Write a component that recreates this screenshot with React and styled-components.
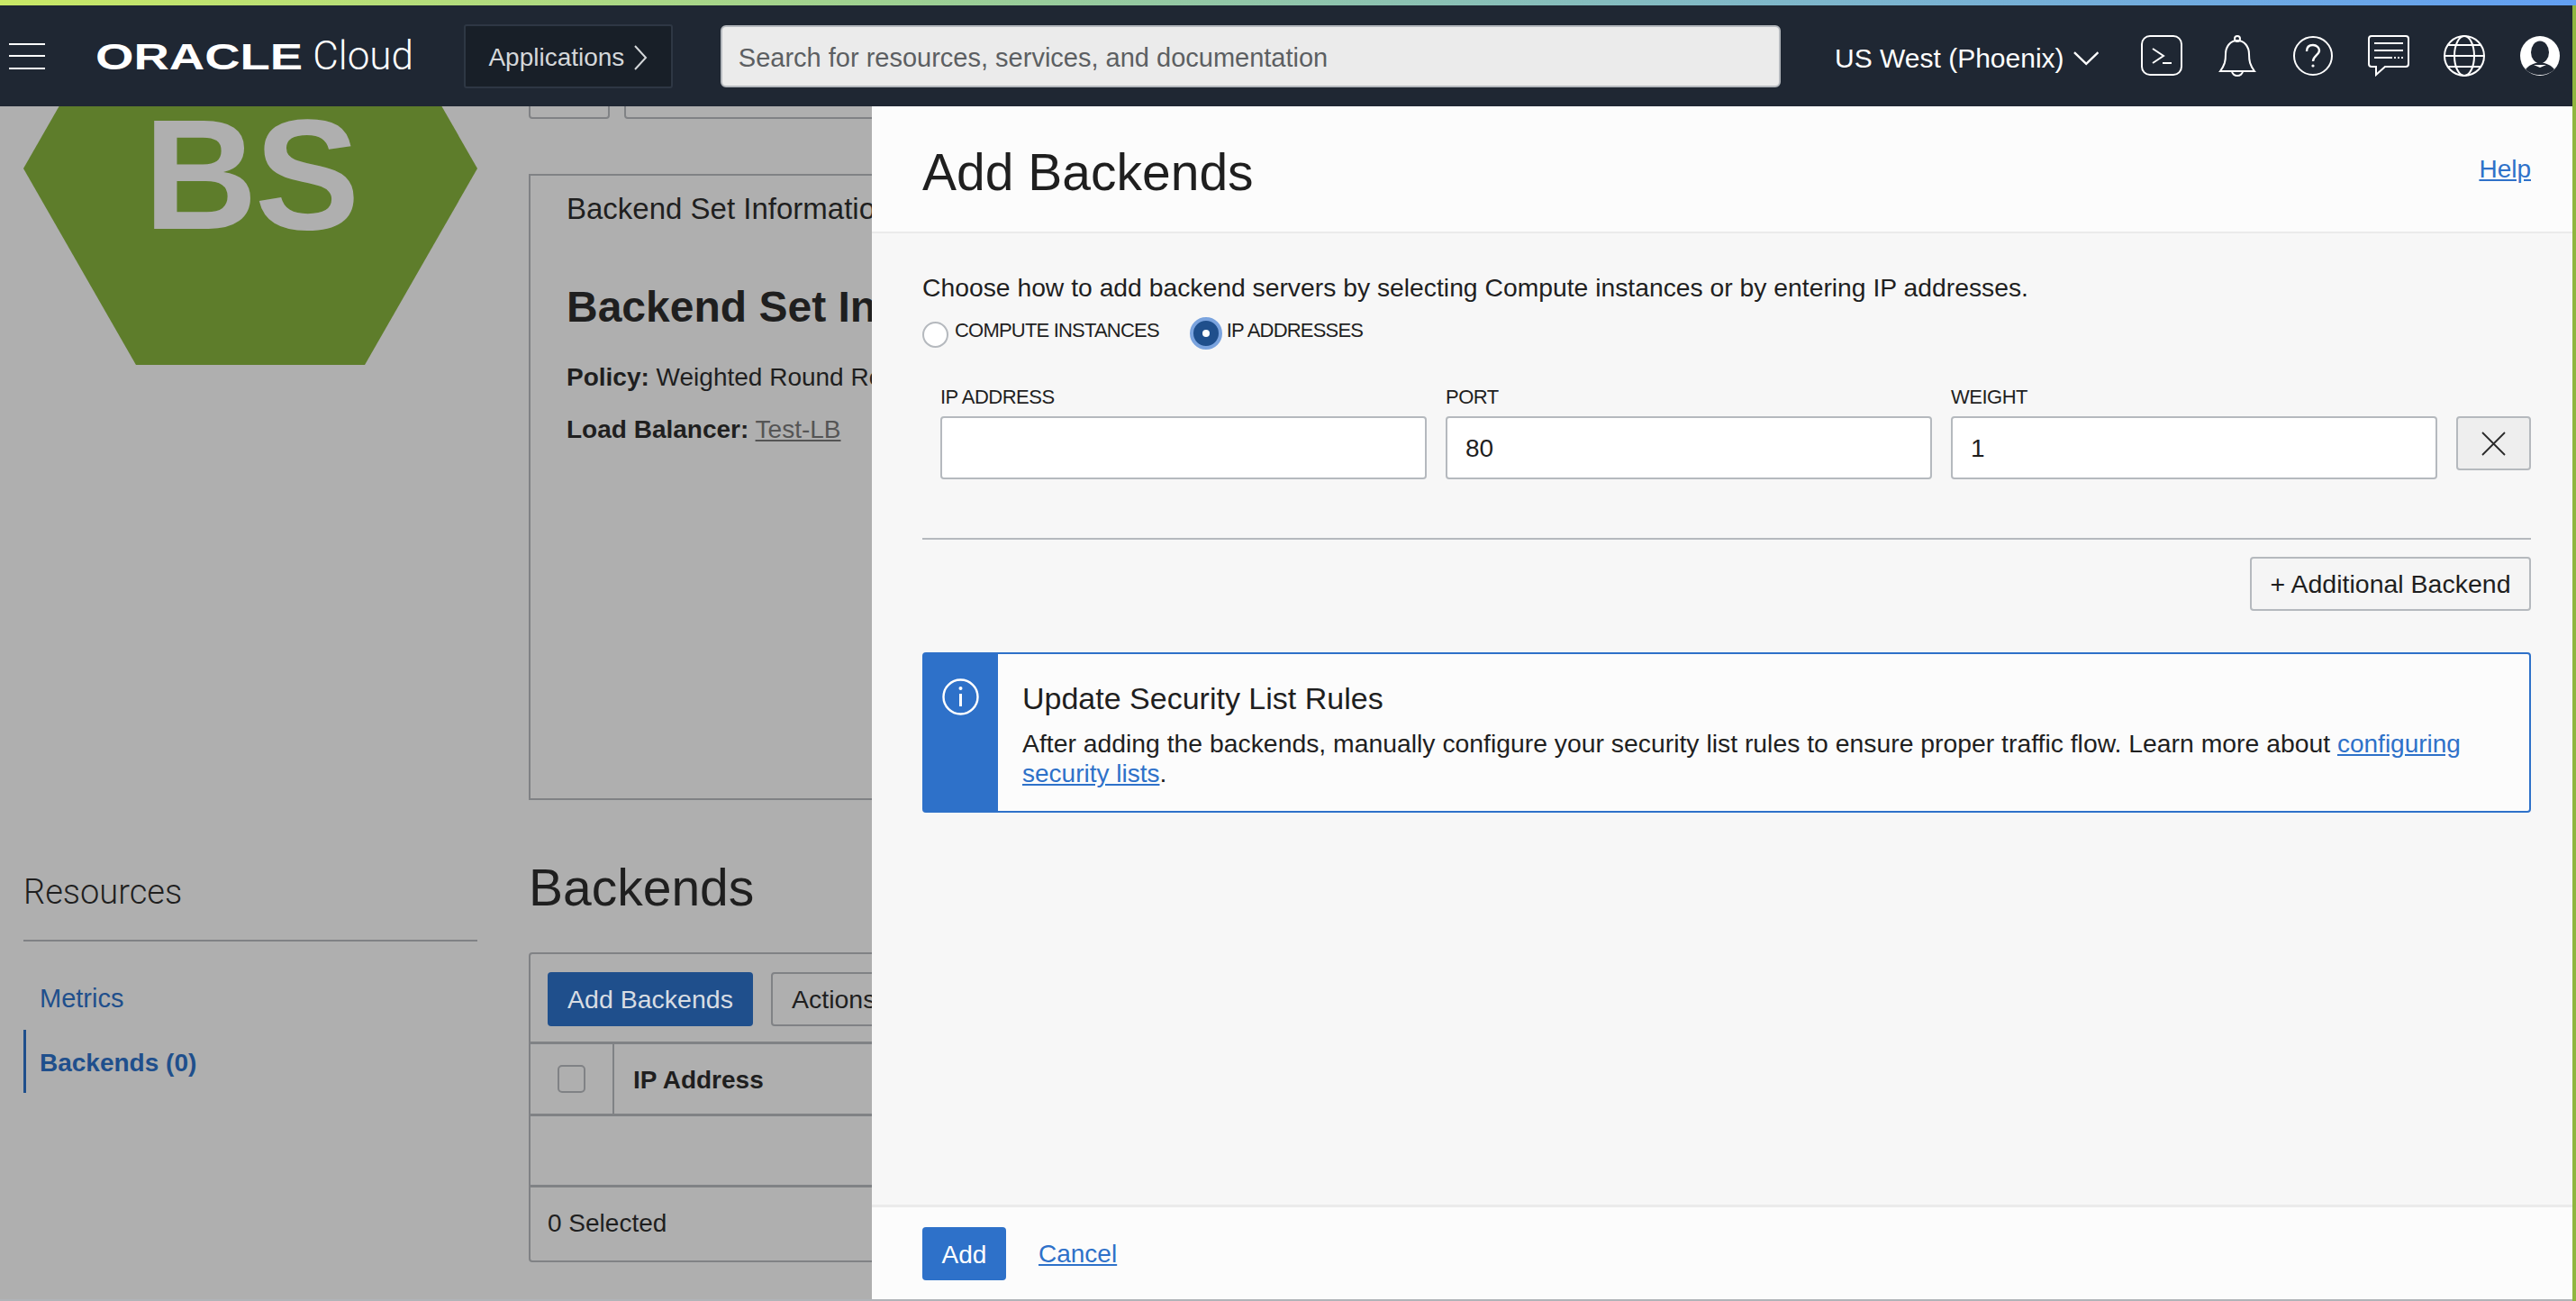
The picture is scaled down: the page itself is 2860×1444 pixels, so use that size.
import React from "react";
import styled, { createGlobalStyle } from "styled-components";

const Global = createGlobalStyle`
  html, body { margin: 0; padding: 0; }
  body { font-family: "Liberation Sans", Arial, sans-serif; color: #1f1f1f; }
  * { box-sizing: border-box; }
`;

const Frame = styled.div`
  width: 2860px;
  height: 1444px;
  overflow: hidden;
  display: grid;
  grid-template-columns: 2856px 4px;
  grid-template-rows: 6px 1436px 2px;
  background: #fff;
`;
const GradientBar = styled.div`
  grid-column: 1 / 3;
  background: linear-gradient(90deg, #c9e866 0%, #9ccf94 36%, #80b8c8 68%, #629ff2 100%);
`;
const Screen = styled.div`
  display: flex;
  flex-direction: column;
  min-height: 0;
`;
const RightEdge = styled.div`
  grid-row: 2 / 4;
  grid-column: 2;
  background: #8fb63f;
`;
const BottomEdge = styled.div`
  background: #b0b4b8;
`;

/* header */
const Header = styled.header`
  height: 112px;
  flex: none;
  display: flex;
  align-items: center;
  background: #1f2733;
  padding: 0 13px 0 10px;
  color: #fff;
  position: relative;
  z-index: 2;
`;
const Burger = styled.div`
  width: 40px;
  height: 29px;
  display: flex;
  flex-direction: column;
  justify-content: space-between;
  margin-right: 56px;
  span { display: block; height: 2px; background: #fff; }
`;
const Logo = styled.div`
  width: 353px;
  display: flex;
  align-items: baseline;
  margin-right: 56px;
  height: 44px;
`;
const LogoWord = styled.span`
  display: inline-block;
  width: 243px;
  font-size: 41px;
  line-height: 44px;
  font-weight: 700;
  transform: scaleX(1.33);
  transform-origin: left center;
`;
const LogoCloud = styled.span`
  font-family: Roboto, "Liberation Sans", sans-serif;
  font-weight: 300;
  font-size: 44px;
  line-height: 44px;
`;
const AppsButton = styled.button`
  width: 232px;
  height: 71px;
  margin-right: 53px;
  background: #181f28;
  border: 2px solid #2e3744;
  border-radius: 3px;
  color: #d4d7da;
  font: 28px "Liberation Sans", sans-serif;
  display: flex;
  align-items: center;
  justify-content: center;
  gap: 10px;
  padding: 4px 0 0;
`;
const SearchBox = styled.input`
  width: 1178px;
  height: 69px;
  background: #ebebeb;
  border: 2px solid #b5b9be;
  border-radius: 6px;
  padding: 4px 18px 0;
  font: 29px "Liberation Sans", sans-serif;
  margin-right: 60px;
  &::placeholder { color: #5c5f62; opacity: 1; }
`;
const Region = styled.div`
  display: flex;
  align-items: center;
  gap: 10px;
  font-size: 30px;
  width: 293px;
  margin-right: 47px;
  padding-top: 6px;
  white-space: nowrap;
`;
const IconRow = styled.div`
  display: flex;
  gap: 38px;
`;
const IconSlot = styled.div`
  width: 46px;
  height: 46px;
  svg { display: block; }
`;

/* page behind the panel */
const Viewport = styled.div`
  flex: 1;
  min-height: 0;
  position: relative;
  overflow: hidden;
  background: #afafaf;
`;
const BackPage = styled.div`
  display: flex;
  margin-top: -149px;
  padding-left: 26px;
`;
const Sidebar = styled.aside`
  width: 504px;
  flex: none;
  margin-right: 57px;
`;
const Hexagon = styled.div`
  width: 504px;
  height: 436px;
  padding-top: 12px;
  background: #5e7d2b;
  clip-path: polygon(24.8% 0, 75.2% 0, 100% 50%, 75.2% 100%, 24.8% 100%, 0 50%);
  display: flex;
  align-items: center;
  justify-content: center;
  color: #afafaf;
  font-size: 175px;
  letter-spacing: -3px;
  font-weight: 700;
`;
const SideTitle = styled.h3`
  margin: 564px 0 0;
  height: 76px;
  border-bottom: 2px solid #808285;
  font-family: Roboto, "Liberation Sans", sans-serif;
  font-weight: 300;
  font-size: 38px;
  line-height: 42px;
`;
const SideNav = styled.nav`
  margin-top: 46px;
  display: flex;
  flex-direction: column;
  gap: 17px;
`;
const SideLink = styled.a`
  display: block;
  padding-left: ${(p) => (p.$active ? "15px" : "18px")};
  border-left: ${(p) => (p.$active ? "3px solid #1f4f8c" : "none")};
  height: ${(p) => (p.$active ? "70px" : "35px")};
  line-height: ${(p) => (p.$active ? "74px" : "35px")};
  font-size: ${(p) => (p.$active ? "28px" : "29px")};
  font-weight: ${(p) => (p.$active ? 700 : 400)};
  color: #1f4f8c;
`;
const Main = styled.main`
  width: 381px;
  flex: none;
  padding-top: 103px;
  overflow: hidden;
`;
const TopButtons = styled.div`
  display: flex;
  gap: 16px;
  height: 60px;
`;
const GhostButton = styled.div`
  flex: none;
  border: 2px solid #808285;
  border-radius: 4px;
  width: ${(p) => p.$w}px;
`;
const InfoCard = styled.section`
  margin-top: 61px;
  width: 800px;
  height: 695px;
  border: 2px solid #808285;
  padding: 17px 40px;
`;
const CardCaption = styled.div`
  font-size: 33px;
  line-height: 40px;
  white-space: nowrap;
`;
const CardHeading = styled.h2`
  margin: 59px 0 0;
  font-size: 48px;
  line-height: 60px;
  font-weight: 700;
  white-space: nowrap;
`;
const CardLine = styled.p`
  margin: ${(p) => p.$top}px 0 0;
  font-size: 28px;
  line-height: 36px;
  white-space: nowrap;
  b { font-weight: 700; }
  a { text-decoration: underline; color: #555; }
`;
const SectionTitle = styled.h2`
  margin: 61px 0 0;
  font-size: 57px;
  line-height: 72px;
  font-weight: 400;
`;
const TableBox = styled.section`
  margin-top: 36px;
  width: 800px;
  height: 344px;
  border: 2px solid #808285;
  border-radius: 4px;
`;
const TableTools = styled.div`
  height: 100px;
  padding: 20px 19px 0;
  display: flex;
  gap: 20px;
  border-bottom: 3px solid #808285;
`;
const PrimaryDark = styled.div`
  width: 228px;
  height: 60px;
  background: #1f4f8c;
  color: #d8dde3;
  border-radius: 4px;
  font-size: 28.5px;
  display: flex;
  align-items: center;
  justify-content: center;
`;
const ToolButton = styled.div`
  width: 200px;
  height: 60px;
  border: 2px solid #808285;
  border-radius: 4px;
  font-size: 28.5px;
  padding-left: 21px;
  display: flex;
  align-items: center;
`;
const HeadRow = styled.div`
  height: 80px;
  display: flex;
  border-bottom: 3px solid #808285;
`;
const CheckCell = styled.div`
  width: 93px;
  border-right: 2px solid #808285;
  display: flex;
  align-items: center;
  padding-left: 30px;
`;
const CheckBox = styled.span`
  width: 31px;
  height: 31px;
  border: 2px solid #808285;
  border-radius: 5px;
`;
const HeadLabel = styled.div`
  padding-left: 21px;
  font-size: 28px;
  font-weight: 700;
  line-height: 80px;
`;
const EmptyRow = styled.div`
  height: 79px;
  border-bottom: 3px solid #808285;
`;
const SelectedRow = styled.div`
  padding-left: 19px;
  font-size: 28px;
  line-height: 80px;
`;

/* slide-in panel */
const Panel = styled.aside`
  position: absolute;
  top: 0;
  right: 0;
  bottom: 0;
  width: 1888px;
  background: #f7f7f7;
  display: flex;
  flex-direction: column;
`;
const PanelHead = styled.div`
  height: 141px;
  flex: none;
  background: #fcfcfc;
  border-bottom: 2px solid #ebebeb;
  padding: 7px 46px 0 56px;
  display: flex;
  align-items: center;
  justify-content: space-between;
`;
const PanelTitle = styled.h1`
  margin: 0;
  font-size: 57px;
  font-weight: 400;
`;
const TextLink = styled.a`
  color: #2e71c9;
  text-decoration: underline;
  font-size: 28px;
`;
const HelpLink = styled(TextLink)`
  margin-bottom: 7px;
`;
const CancelLink = styled(TextLink)`
  padding-top: 2px;
`;
const PanelBody = styled.div`
  flex: 1;
  padding: 43px 46px 0 56px;
`;
const Intro = styled.p`
  margin: 0;
  font-size: 28.3px;
  line-height: 34px;
`;
const RadioRow = styled.div`
  margin-top: 16px;
  height: 36px;
  display: flex;
  align-items: center;
`;
const Radio = styled.span`
  flex: none;
  border-radius: 50%;
  display: flex;
  align-items: center;
  justify-content: center;
  ${(p) =>
    p.$on
      ? `width: 36px; height: 36px; margin-left: 34px; background: #1f4f8c; border: 4px solid #7aa3de;`
      : `width: 29px; height: 29px; margin-top: 2px; background: #fff; border: 2px solid #b5b9be;`}
  &::after {
    content: "";
    width: 8px;
    height: 8px;
    border-radius: 50%;
    background: ${(p) => (p.$on ? "#fff" : "transparent")};
  }
`;
const RadioLabel = styled.span`
  margin-left: ${(p) => (p.$on ? "5px" : "7px")};
  padding-bottom: 6px;
  font-size: 22px;
  letter-spacing: -0.8px;
  white-space: nowrap;
`;
const FieldRow = styled.div`
  margin-top: 40px;
  padding-left: 20px;
  display: grid;
  grid-template-columns: 1fr 1fr 1fr 83px;
  column-gap: 21px;
`;
const FieldLabel = styled.label`
  display: block;
  font-size: 22px;
  letter-spacing: -0.5px;
  line-height: 26px;
  margin-bottom: 8px;
`;
const FieldInput = styled.input`
  display: block;
  width: 100%;
  height: 70px;
  background: #fff;
  border: 2px solid #b5b9be;
  border-radius: 4px;
  padding: 2px 20px 0;
  font: 28px "Liberation Sans", sans-serif;
  color: #1f1f1f;
`;
const RemoveButton = styled.button`
  margin-top: 34px;
  height: 60px;
  background: #eeeeee;
  border: 2px solid #b5b9be;
  border-radius: 4px;
  padding: 0;
  display: flex;
  align-items: center;
  justify-content: center;
`;
const Divider = styled.hr`
  margin: 65px 0 0;
  border: 0;
  height: 2px;
  background: #b5b9be;
`;
const RightAlign = styled.div`
  margin-top: 19px;
  display: flex;
  justify-content: flex-end;
`;
const OutlineButton = styled.button`
  height: 60px;
  width: 312px;
  background: #f5f5f5;
  border: 2px solid #b5b9be;
  border-radius: 4px;
  padding: 0;
  font: 28.5px "Liberation Sans", sans-serif;
  color: #1f1f1f;
`;
const Notice = styled.div`
  margin-top: 46px;
  height: 178px;
  display: flex;
  background: #fcfcfc;
  border: 2px solid #2e71c9;
  border-radius: 4px;
`;
const NoticeIcon = styled.div`
  width: 82px;
  flex: none;
  background: #2e71c9;
  padding: 27px 0 0 20px;
`;
const NoticeText = styled.div`
  padding: 29px 30px 0 27px;
`;
const NoticeTitle = styled.div`
  font-size: 34px;
  line-height: 40px;
`;
const NoticeBody = styled.p`
  margin: 14px 0 0;
  font-size: 28.35px;
  line-height: 32px;
`;
const PanelFooter = styled.div`
  height: 105px;
  flex: none;
  background: #fcfcfc;
  border-top: 3px solid #ebebeb;
  padding: 0 56px;
  display: flex;
  align-items: center;
  gap: 36px;
`;
const AddButton = styled.button`
  width: 93px;
  height: 59px;
  border: 0;
  border-radius: 4px;
  background: #2e71c9;
  color: #fff;
  padding: 3px 0 0;
  font: 28px "Liberation Sans", sans-serif;
`;

const stroke = { fill: "none", stroke: "#fff", strokeWidth: 2 };

const TerminalIcon = () => (
  <svg width="46" height="46" viewBox="0 0 46 46" {...stroke}>
    <rect x="1" y="1" width="44" height="43" rx="9" />
    <path d="M13 15l12 8-12 8M24 31h10" />
  </svg>
);
const BellIcon = () => (
  <svg width="46" height="46" viewBox="0 0 46 46" {...stroke}>
    <path d="M4 40c5-7 6-11 6-19 0-8 5-15 13-15s13 7 13 15c0 8 1 12 6 19z" />
    <circle cx="23" cy="4" r="3" />
    <path d="M17 40c0 3 3 5 6 5s6-2 6-5" />
  </svg>
);
const HelpIcon = () => (
  <svg width="46" height="46" viewBox="0 0 46 46" {...stroke}>
    <circle cx="23" cy="23" r="21" />
    <path d="M16 18c0-5 3-7 7-7s7 3 7 6c0 5-7 6-7 12" strokeWidth="2.4" />
    <circle cx="23" cy="34" r="1.6" fill="#fff" stroke="none" />
  </svg>
);
const ChatIcon = () => (
  <svg width="46" height="46" viewBox="0 0 46 46" {...stroke}>
    <path d="M4 1h38a3 3 0 0 1 3 3v28a3 3 0 0 1-3 3H19L9 44v-9H4a3 3 0 0 1-3-3V4a3 3 0 0 1 3-3z" />
    <path d="M7 9h32M7 17h32M7 25h20" />
    <path d="M29 25h10" strokeDasharray="2 2" />
  </svg>
);
const GlobeIcon = () => (
  <svg width="46" height="46" viewBox="0 0 46 46" {...stroke}>
    <circle cx="23" cy="23" r="22" />
    <ellipse cx="23" cy="23" rx="11" ry="22" />
    <path d="M1 23h44M5 11h36M5 35h36" />
  </svg>
);
const AvatarIcon = () => (
  <svg width="46" height="46" viewBox="0 0 46 46">
    <circle cx="23" cy="23" r="22" fill="#fff" />
    <ellipse cx="23" cy="19" rx="10" ry="12.5" fill="#1f2733" />
    <path d="M7 38c4-5 10-7 12-7h8c2 0 8 2 12 7-4 4-10 6-16 6s-12-2-16-6z" fill="#1f2733" />
    <path d="M16 33l7 3 7-3" fill="#fff" />
  </svg>
);
const Chevron = ({ dir }) =>
  dir === "right" ? (
    <svg width="16" height="28" viewBox="0 0 16 28" fill="none" stroke="#d4d7da" strokeWidth="2">
      <path d="M2 1l12 13L2 27" />
    </svg>
  ) : (
    <svg width="29" height="16" viewBox="0 0 29 16" fill="none" stroke="#fff" strokeWidth="2.4">
      <path d="M1 1l13.5 13L28 1" />
    </svg>
  );
const InfoIcon = () => (
  <svg width="41" height="41" viewBox="0 0 41 41" fill="none" stroke="#fff" strokeWidth="2.4">
    <circle cx="20.5" cy="20.5" r="19" />
    <path d="M20.5 17v14" strokeWidth="3" />
    <circle cx="20.5" cy="11" r="2" fill="#fff" stroke="none" />
  </svg>
);
const CloseIcon = () => (
  <svg width="27" height="27" viewBox="0 0 27 27" fill="none" stroke="#2a2a2a" strokeWidth="1.8">
    <path d="M1 1l25 25M26 1L1 26" />
  </svg>
);

const fields = [
  { label: "IP ADDRESS", value: "" },
  { label: "PORT", value: "80" },
  { label: "WEIGHT", value: "1" },
];

export default function App() {
  return (
    <>
      <Global />
      <Frame>
        <GradientBar />
        <Screen>
          <Header>
            <Burger>
              <span />
              <span />
              <span />
            </Burger>
            <Logo>
              <LogoWord>ORACLE</LogoWord>
              <LogoCloud>Cloud</LogoCloud>
            </Logo>
            <AppsButton>
              Applications <Chevron dir="right" />
            </AppsButton>
            <SearchBox placeholder="Search for resources, services, and documentation" />
            <Region>
              US West (Phoenix) <Chevron dir="down" />
            </Region>
            <IconRow>
              <IconSlot><TerminalIcon /></IconSlot>
              <IconSlot><BellIcon /></IconSlot>
              <IconSlot><HelpIcon /></IconSlot>
              <IconSlot><ChatIcon /></IconSlot>
              <IconSlot><GlobeIcon /></IconSlot>
              <IconSlot><AvatarIcon /></IconSlot>
            </IconRow>
          </Header>
          <Viewport>
            <BackPage>
              <Sidebar>
                <Hexagon>BS</Hexagon>
                <SideTitle>Resources</SideTitle>
                <SideNav>
                  <SideLink>Metrics</SideLink>
                  <SideLink $active>Backends (0)</SideLink>
                </SideNav>
              </Sidebar>
              <Main>
                <TopButtons>
                  <GhostButton $w={90} />
                  <GhostButton $w={400} />
                </TopButtons>
                <InfoCard>
                  <CardCaption>Backend Set Information</CardCaption>
                  <CardHeading>Backend Set Information</CardHeading>
                  <CardLine $top={30}><b>Policy:</b> Weighted Round Robin</CardLine>
                  <CardLine $top={22}><b>Load Balancer:</b> <a>Test-LB</a></CardLine>
                </InfoCard>
                <SectionTitle>Backends</SectionTitle>
                <TableBox>
                  <TableTools>
                    <PrimaryDark>Add Backends</PrimaryDark>
                    <ToolButton>Actions</ToolButton>
                  </TableTools>
                  <HeadRow>
                    <CheckCell><CheckBox /></CheckCell>
                    <HeadLabel>IP Address</HeadLabel>
                  </HeadRow>
                  <EmptyRow />
                  <SelectedRow>0 Selected</SelectedRow>
                </TableBox>
              </Main>
            </BackPage>
            <Panel>
              <PanelHead>
                <PanelTitle>Add Backends</PanelTitle>
                <HelpLink>Help</HelpLink>
              </PanelHead>
              <PanelBody>
                <Intro>Choose how to add backend servers by selecting Compute instances or by entering IP addresses.</Intro>
                <RadioRow>
                  <Radio />
                  <RadioLabel>COMPUTE INSTANCES</RadioLabel>
                  <Radio $on />
                  <RadioLabel $on>IP ADDRESSES</RadioLabel>
                </RadioRow>
                <FieldRow>
                  {fields.map((f) => (
                    <div key={f.label}>
                      <FieldLabel>{f.label}</FieldLabel>
                      <FieldInput defaultValue={f.value} />
                    </div>
                  ))}
                  <RemoveButton><CloseIcon /></RemoveButton>
                </FieldRow>
                <Divider />
                <RightAlign>
                  <OutlineButton>+ Additional Backend</OutlineButton>
                </RightAlign>
                <Notice>
                  <NoticeIcon><InfoIcon /></NoticeIcon>
                  <NoticeText>
                    <NoticeTitle>Update Security List Rules</NoticeTitle>
                    <NoticeBody>
                      After adding the backends, manually configure your security list rules to ensure proper traffic flow. Learn more about <TextLink>configuring security lists</TextLink>.
                    </NoticeBody>
                  </NoticeText>
                </Notice>
              </PanelBody>
              <PanelFooter>
                <AddButton>Add</AddButton>
                <CancelLink>Cancel</CancelLink>
              </PanelFooter>
            </Panel>
          </Viewport>
        </Screen>
        <RightEdge />
        <BottomEdge />
      </Frame>
    </>
  );
}
